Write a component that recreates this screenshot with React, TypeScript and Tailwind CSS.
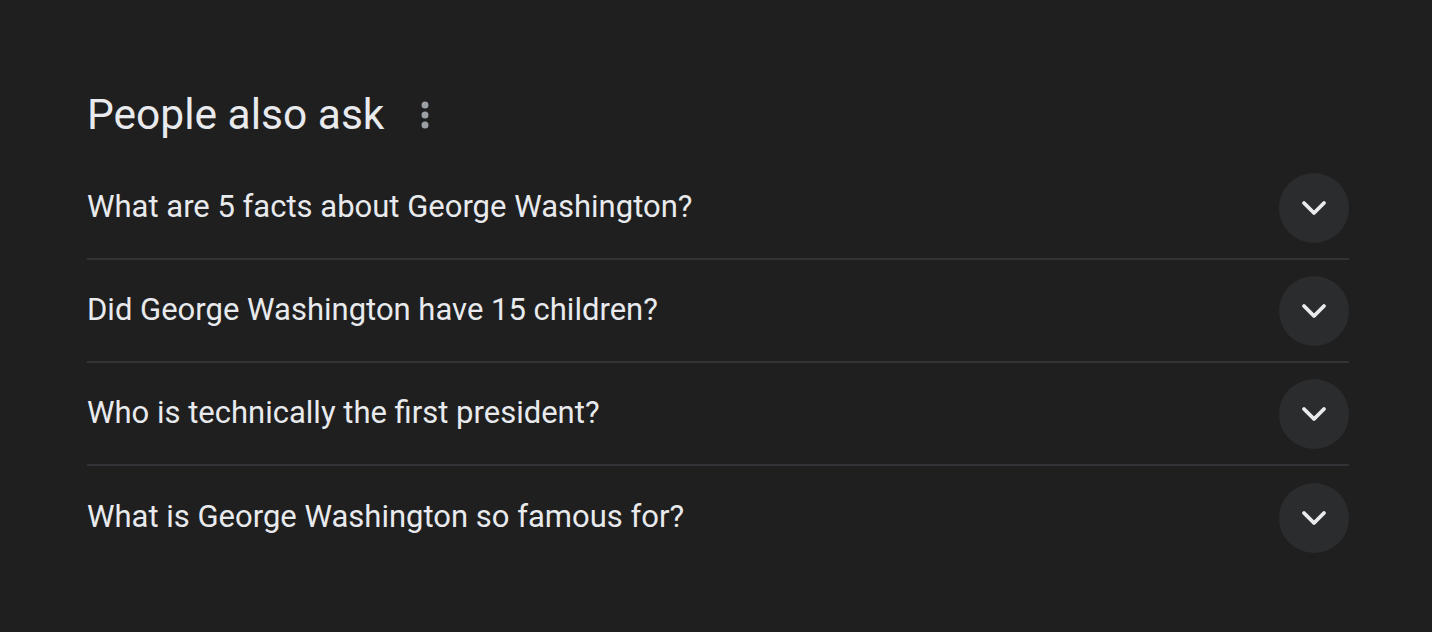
import { ChevronDown } from 'lucide-react'

const QUESTIONS = [
  'What are 5 facts about George Washington?',
  'Did George Washington have 15 children?',
  'Who is technically the first president?',
  'What is George Washington so famous for?',
]

function MoreDots() {
  return (
    <svg width="10" height="30" viewBox="0 0 10 30" className="text-[#9aa0a6]">
      <circle cx="5" cy="5" r="3.5" fill="currentColor" />
      <circle cx="5" cy="15" r="3.5" fill="currentColor" />
      <circle cx="5" cy="25" r="3.5" fill="currentColor" />
    </svg>
  )
}

export default function App() {
  return (
    <div className="w-[1432px] h-[632px] bg-[#1f1f1f] font-['Roboto',sans-serif] text-[#e8eaed]">
      <div className="pl-[87px] pr-[83px] pt-[88px]">
        <div className="flex items-center gap-[36px] h-[54px]">
          <h2 className="text-[42.5px] leading-none">People also ask</h2>
          <MoreDots />
        </div>
        <div className="mt-[15px]">
          {QUESTIONS.map((q, i) => (
            <div
              key={q}
              className={`flex items-center justify-between h-[103px] ${i < QUESTIONS.length - 1 ? 'border-b-2 border-[#323336]' : ''}`}
            >
              <span className="text-[31px]">{q}</span>
              <button className="flex items-center justify-center w-[70px] h-[70px] rounded-full bg-[#2b2c2e] text-[#e8eaed]">
                <ChevronDown className="w-[40px] h-[40px]" strokeWidth={2.3} />
              </button>
            </div>
          ))}
        </div>
      </div>
    </div>
  )
}
